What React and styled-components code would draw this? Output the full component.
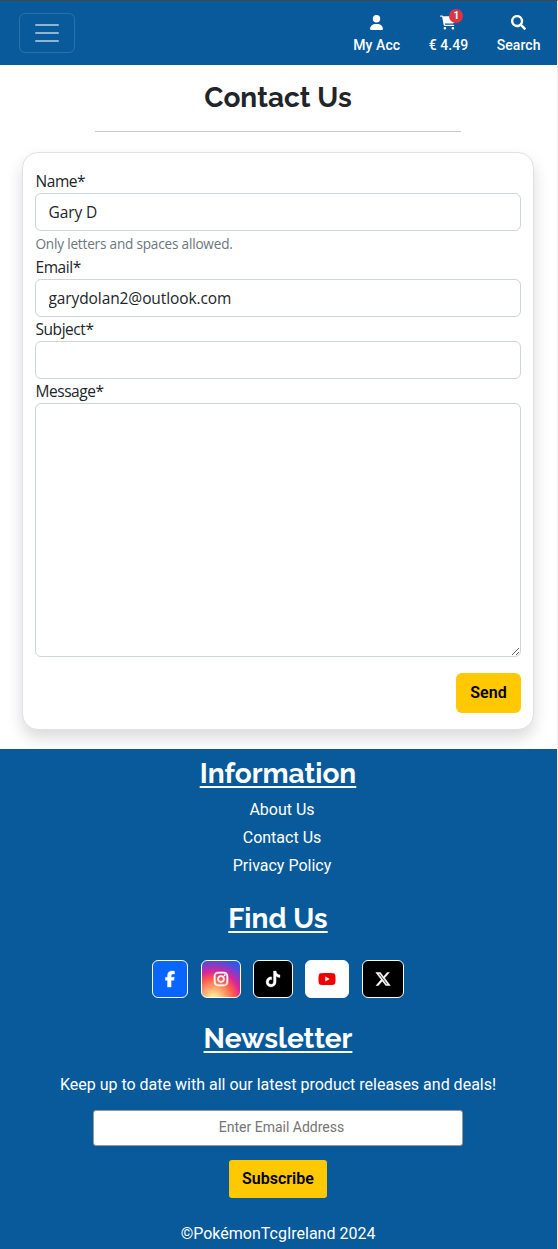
import React from "react";
import styled, { createGlobalStyle } from "styled-components";
import { FaSearch } from "react-icons/fa";
import {
  FaUser,
  FaCartShopping,
  FaFacebookF,
  FaInstagram,
  FaTiktok,
  FaYoutube,
  FaXTwitter,
} from "react-icons/fa6";

const Global = createGlobalStyle`
  *, *::before, *::after { box-sizing: border-box; }
  body { margin: 0; background: #fff; color: #212529; font-family: Roboto, sans-serif; font-size: 16px; line-height: 1.5; }
  h1, h2, p { margin: 0; }
`;

const Page = styled.div`
  height: 1249px;
  display: flex;
  flex-direction: column;
  overflow: hidden;
  border-top: 1px solid #464646;
  border-right: 1px solid #f0f0f0;
`;

const Header = styled.header`
  height: 64px;
  flex: none;
  display: flex;
  justify-content: space-between;
  align-items: flex-start;
  padding: 12px 16.5px 0 19px;
  background: #085a9a;
`;

const Toggler = styled.button`
  width: 56px;
  height: 40px;
  padding: 0 12px;
  border: 1px solid rgba(255, 255, 255, 0.15);
  border-radius: 6px;
  background: transparent;
  display: flex;
  align-items: center;
  svg { width: 30px; height: 30px; }
`;

const Actions = styled.nav`
  display: flex;
  gap: 28.5px;
`;

const Action = styled.a`
  display: flex;
  flex-direction: column;
  align-items: center;
  color: #fff;
  font-size: 14px;
  font-weight: 500;
  letter-spacing: 0.06px;
  line-height: 21px;
  svg { display: block; height: 15px; width: ${(p) => p.$w || 15}px; }
`;

const IconBox = styled.span`
  position: relative;
  display: block;
  margin: 2px 0 5px;
`;

const Badge = styled.span`
  position: absolute;
  left: 9px;
  top: -6px;
  width: 14px;
  height: 14px;
  border-radius: 50%;
  background: #dc3545;
  font-size: 10px;
  font-weight: 700;
  line-height: 14px;
  text-align: center;
`;

const Main = styled.main`
  flex: none;
  height: 684px;
  padding: 16px 23px 0 22px;
  display: flex;
  flex-direction: column;
  align-items: center;
  overflow: hidden;
`;

const Title = styled.h1`
  font: 700 28px/34px Raleway, Lato, sans-serif;
  text-decoration: ${(p) => (p.$underline ? "underline" : "none")};
  text-decoration-thickness: 2px;
  text-underline-offset: 3px;
`;

const Rule = styled.hr`
  width: 366px;
  margin: 16px 0 20px;
  border: 0;
  border-top: 1px solid #c7c8ca;
`;

const Card = styled.form`
  width: 512px;
  height: 578px;
  padding: 16px 12px;
  border: 1px solid #dee2e6;
  border-radius: 16px;
  background: #fff;
  box-shadow: 0 8px 16px rgba(0, 0, 0, 0.15);
  display: flex;
  flex-direction: column;
  font-family: "Segoe UI", "Open Sans", sans-serif;
`;

const Label = styled.label`
  padding-left: 0.5px;
  font-size: 15.5px;
  line-height: 24px;
  letter-spacing: -0.45px;
`;

const Field = styled.input`
  height: 38px;
  padding: 6px 12.5px;
  border: 1px solid #ced4da;
  border-radius: 6px;
  outline: 0;
  color: #212529;
  font: 15.5px/24px "Segoe UI", "Open Sans", sans-serif;
  letter-spacing: -0.1px;
`;

const Message = styled.textarea`
  height: 254px;
  border: 1px solid #ced4da;
  border-radius: 6px;
  resize: vertical;
`;

const Help = styled.small`
  color: #6c757d;
  font-size: 13.6px;
  line-height: 24px;
  padding: 1px 0 0 0.5px;
  height: 24px;
  letter-spacing: -0.2px;
`;

const Button = styled.button`
  width: ${(p) => p.$w}px;
  height: ${(p) => p.$h}px;
  flex: none;
  padding: 0;
  border: 0;
  border-radius: ${(p) => p.$r}px;
  background: #ffc800;
  color: #000;
  font: 600 16px/24px Roboto, sans-serif;
`;

const SendRow = styled.div`
  display: flex;
  justify-content: flex-end;
  margin-top: 16px;
`;

const Footer = styled.footer`
  flex: 1;
  padding: 8px 1px 0 0;
  display: flex;
  flex-direction: column;
  align-items: center;
  background: #085a9a;
  color: #fff;
`;

const Links = styled.nav`
  display: flex;
  flex-direction: column;
  align-items: center;
  margin: 5px 0 22px 8px;
  line-height: 28px;
`;

const Socials = styled.div`
  display: flex;
  gap: 12.4px;
  margin: 24px 0 24px;
`;

const Social = styled.a`
  display: flex;
  align-items: center;
  justify-content: center;
  height: 38px;
  width: ${(p) => p.$w + 26}px;
  border: 1px solid #fff;
  border-radius: 6px;
  background: ${(p) => p.$bg};
  color: ${(p) => p.$color || "#fff"};
  svg {
    width: ${(p) => p.$w}px;
    height: 16px;
    overflow: visible;
    stroke-width: ${(p) => p.$bold || 0};
  }
`;

const Pitch = styled.p`
  margin-top: 17px;
`;

const EmailInput = styled.input`
  width: 370px;
  height: 36px;
  margin: 13px 0 14px;
  padding: 0 0 2px 7px;
  border: 1px solid #999;
  border-radius: 3px;
  text-align: center;
  font: 14px Roboto, sans-serif;
  &::placeholder { color: #757575; }
`;

const Copyright = styled.p`
  margin-top: 24px;
`;

const socials = [
  { Icon: FaFacebookF, w: 10, bg: "#0866ff", bold: 12 },
  {
    Icon: FaInstagram,
    w: 14,
    bold: 18,
    bg: "radial-gradient(circle at 30% 107%, #fdf497 0%, #fdf497 5%, #fd5949 45%, #d6249f 60%, #285aeb 90%)",
  },
  { Icon: FaTiktok, w: 14, bg: "#000", bold: 8 },
  { Icon: FaYoutube, w: 18, bg: "#fff", color: "#f00000" },
  { Icon: FaXTwitter, w: 16, bg: "#000", bold: 16 },
];

export default function App() {
  return (
    <>
      <Global />
      <Page>
        <Header>
          <Toggler type="button" aria-label="Menu">
            <svg viewBox="0 0 30 30">
              <path
                d="M4 7h22M4 15h22M4 23h22"
                stroke="rgba(255,255,255,.55)"
                strokeLinecap="round"
                strokeMiterlimit="10"
                strokeWidth="2"
              />
            </svg>
          </Toggler>
          <Actions>
            <Action $w={13}>
              <IconBox><FaUser /></IconBox>
              My Acc
            </Action>
            <Action $w={16}>
              <IconBox>
                <FaCartShopping />
                <Badge>1</Badge>
              </IconBox>
              € 4.49
            </Action>
            <Action>
              <IconBox><FaSearch /></IconBox>
              Search
            </Action>
          </Actions>
        </Header>
        <Main>
          <Title>Contact Us</Title>
          <Rule />
          <Card>
            <Label htmlFor="name">Name*</Label>
            <Field id="name" defaultValue="Gary D" />
            <Help>Only letters and spaces allowed.</Help>
            <Label htmlFor="email">Email*</Label>
            <Field id="email" defaultValue="garydolan2@outlook.com" />
            <Label htmlFor="subject">Subject*</Label>
            <Field id="subject" />
            <Label htmlFor="message">Message*</Label>
            <Message id="message" />
            <SendRow>
              <Button type="button" $w={65} $h={40} $r={6}>Send</Button>
            </SendRow>
          </Card>
        </Main>
        <Footer>
          <Title as="h2" $underline>Information</Title>
          <Links>
            <a>About Us</a>
            <a>Contact Us</a>
            <a>Privacy Policy</a>
          </Links>
          <Title as="h2" $underline>Find Us</Title>
          <Socials>
            {socials.map(({ Icon, w, bg, color, bold }, i) => (
              <Social key={i} $w={w} $bg={bg} $color={color} $bold={bold}>
                <Icon />
              </Social>
            ))}
          </Socials>
          <Title as="h2" $underline>Newsletter</Title>
          <Pitch>Keep up to date with all our latest product releases and deals!</Pitch>
          <EmailInput placeholder="Enter Email Address" />
          <Button type="button" $w={98} $h={38} $r={3}>Subscribe</Button>
          <Copyright>©PokémonTcgIreland 2024</Copyright>
        </Footer>
      </Page>
    </>
  );
}
